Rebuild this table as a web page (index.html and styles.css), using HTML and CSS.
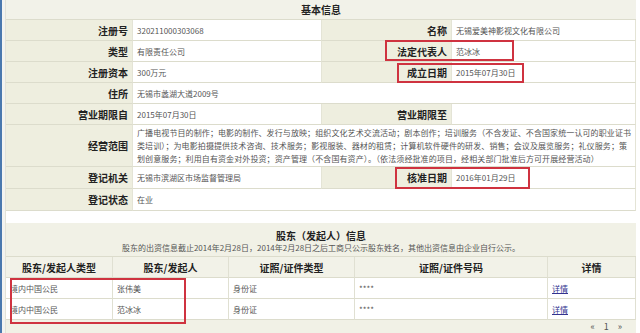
FILE: index.html
```html
<!DOCTYPE html>
<html lang="zh-CN">
<head>
<meta charset="utf-8">
<title>基本信息</title>
<link rel="stylesheet" href="styles.css">
</head>
<body>
<div class="page">
  <div class="edge"></div>
  <div class="gutter"></div>
  <div class="main">
    <section class="info">
      <div class="head span4">基本信息</div>

      <div class="lbl">注册号</div><div class="val">320211000303068</div>
      <div class="lbl">名称</div><div class="val">无锡爱美神影视文化有限公司</div>

      <div class="lbl">类型</div><div class="val">有限责任公司</div>
      <div class="lbl">法定代表人</div><div class="val">范冰冰</div>

      <div class="lbl">注册资本</div><div class="val">300万元</div>
      <div class="lbl">成立日期</div><div class="val">2015年07月30日</div>

      <div class="lbl">住所</div><div class="val span3">无锡市蠡湖大道2009号</div>

      <div class="lbl">营业期限自</div><div class="val">2015年07月30日</div>
      <div class="lbl">营业期限至</div><div class="val"></div>

      <div class="lbl">经营范围</div>
      <div class="val span3 multi">
        <span class="line">广播电视节目的制作；电影的制作、发行与放映；组织文化艺术交流活动；剧本创作；培训服务（不含发证、不含国家统一认可的职业证书</span>
        <span class="line">类培训）；为电影拍摄提供技术咨询、技术服务；影视服装、器材的租赁；计算机软件硬件的研发、销售；会议及展览服务；礼仪服务；策</span>
        <span class="line">划创意服务；利用自有资金对外投资；资产管理（不含国有资产）。（依法须经批准的项目，经相关部门批准后方可开展经营活动）</span>
      </div>

      <div class="lbl">登记机关</div><div class="val">无锡市滨湖区市场监督管理局</div>
      <div class="lbl">核准日期</div><div class="val">2016年01月29日</div>

      <div class="lbl">登记状态</div><div class="val span3">在业</div>
    </section>

    <div class="spacer"></div>

    <section class="holders">
      <div class="title span5">
        <div class="t1">股东（发起人）信息</div>
        <div class="t2">股东的出资信息截止2014年2月28日，2014年2月28日之后工商只公示股东姓名，其他出资信息由企业自行公示。</div>
      </div>
      <div class="th">股东/发起人类型</div>
      <div class="th">股东/发起人</div>
      <div class="th">证照/证件类型</div>
      <div class="th">证照/证件号码</div>
      <div class="th">详情</div>

      <div class="td">境内中国公民</div>
      <div class="td">张伟美</div>
      <div class="td">身份证</div>
      <div class="td">****</div>
      <div class="td"><a class="link" href="#">详情</a></div>

      <div class="td">境内中国公民</div>
      <div class="td">范冰冰</div>
      <div class="td">身份证</div>
      <div class="td">****</div>
      <div class="td"><a class="link" href="#">详情</a></div>

      <div class="pager span5"><span>«</span><span>1</span><span>»</span></div>
    </section>
  </div>

  <div class="mark m1"></div>
  <div class="mark m2"></div>
  <div class="mark m3"></div>
  <div class="mark m4"></div>
</div>
</body>
</html>
```
FILE: styles.css
```css
* { box-sizing: border-box; }
html, body { margin: 0; padding: 0; background: #fff; }
body {
  font-family: "Noto Sans CJK SC", "Noto Sans", sans-serif;
  color: #333;
  overflow: hidden;
}
.page {
  position: relative;
  display: flex;
  width: 640px;
  height: 333px;
}
.edge { width: 2px; background: #4a78ae; }
.gutter { width: 4px; background: #f3f3f0; border-right: 1px solid #e2e2d8; }
.main { width: 630px; display: flex; flex-direction: column; }

.info {
  display: grid;
  grid-template-columns: 127px 189px 130px 184px;
  grid-template-rows: 20px 21px 21px 21px 21px 21px 42px 22px 22px;
  background: #f1f1e6;
}
.span3 { grid-column: span 3; }
.span4 { grid-column: span 4; }
.span5 { grid-column: span 5; }

.head {
  display: flex; align-items: center; justify-content: center;
  font-weight: 700; font-size: 10px; color: #222;
  background: #f2f2e9;
  border-bottom: 1px solid #dcdccc;
}
.lbl {
  display: flex; align-items: center; justify-content: flex-end;
  padding-right: 4px;
  font-weight: 700; font-size: 10px; color: #222;
  background: #eeeedf;
  border-bottom: 1px solid #dcdccc;
  border-right: 1px solid #e4e4d6;
}
.val {
  display: flex; align-items: center;
  padding-left: 4px;
  font-size: 8px; color: #555;
  background: #fff;
  border-bottom: 1px solid #dcdccc;
  border-right: 1px solid #e4e4d6;
}
.val.multi {
  display: flex;
  flex-direction: column;
  align-items: flex-start;
  justify-content: center;
  padding: 0 0 0 4px;
  line-height: 13px;
  letter-spacing: 0.1px;
  white-space: nowrap;
}
.line { display: block; }

.spacer { height: 12px; background: #fff; }

.holders {
  display: grid;
  grid-template-columns: 107px 116px 126px 193px 88px;
  grid-template-rows: 34px 21px 21px 21px 13px;
  background: #f1f1e6;
}
.title {
  display: flex; flex-direction: column; align-items: center;
  padding-top: 7px;
  background: #f1f1e6;
  border-bottom: 1px solid #dcdccc;
}
.t1 { font-weight: 700; font-size: 10px; color: #222; line-height: 12px; }
.t2 { font-size: 8px; color: #555; line-height: 12px; }
.th {
  display: flex; align-items: center; justify-content: center;
  font-weight: 700; font-size: 10px; color: #222;
  background: #f2f2e8;
  border-bottom: 1px solid #dcdccc;
  border-right: 1px solid #e0e0d2;
}
.td {
  display: flex; align-items: center;
  padding-left: 4px;
  font-size: 8px; color: #555;
  background: #fff;
  border-bottom: 1px solid #dcdccc;
  border-right: 1px solid #e0e0d2;
}
.link { color: #33338f; text-decoration: underline; }
.pager {
  display: flex; justify-content: flex-end; align-items: flex-start;
  gap: 9px;
  padding: 2px 14px 0 0;
  font-size: 9px; line-height: 10px; color: #555;
  background: #f1f1e6;
}

.mark {
  position: absolute;
  border: 2px solid #cf3340;
}
.m1 { left: 385px; top: 40px; width: 129px; height: 21px; }
.m2 { left: 397px; top: 63px; width: 127px; height: 20px; }
.m3 { left: 395px; top: 167px; width: 135px; height: 22px; }
.m4 { left: 10px; top: 278px; width: 176px; height: 46px; }
```
